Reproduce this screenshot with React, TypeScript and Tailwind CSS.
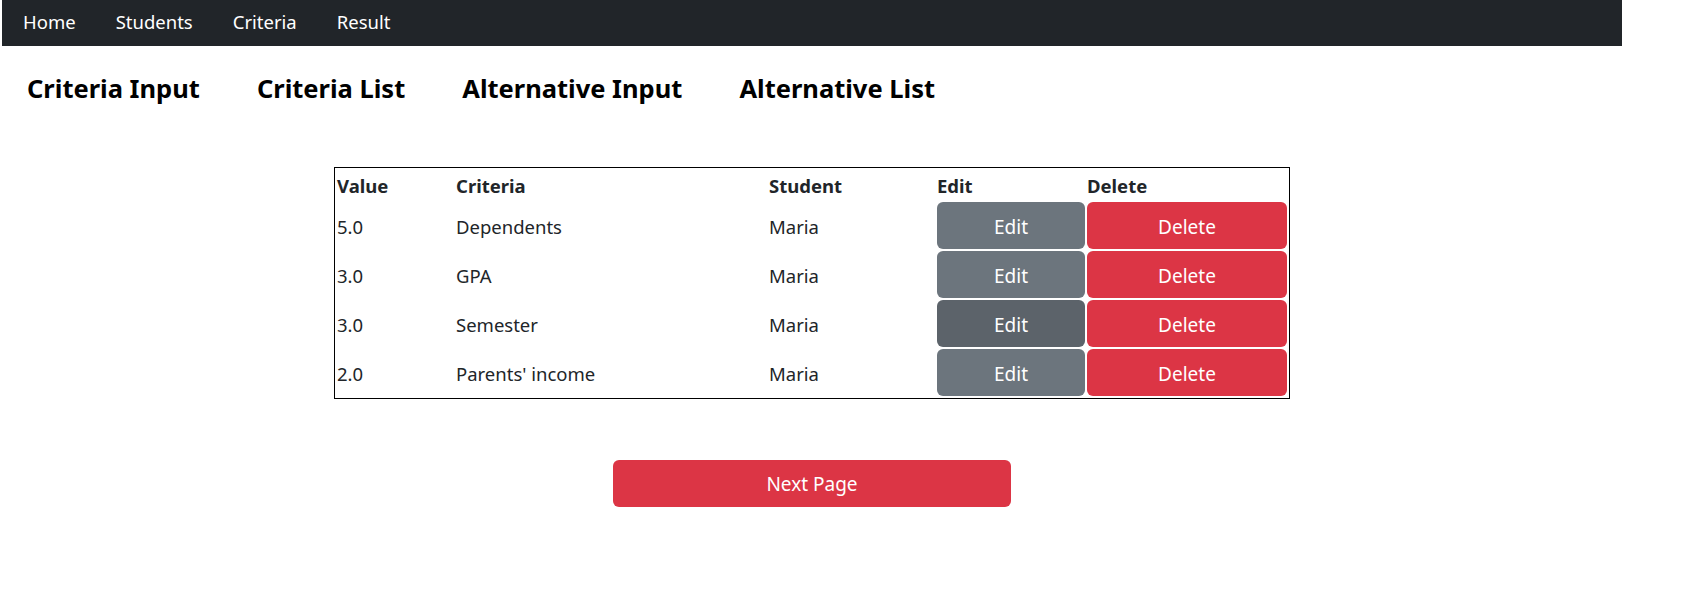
import React from 'react';

const navLinks = ['Home', 'Students', 'Criteria', 'Result'];
const sections = ['Criteria Input', 'Criteria List', 'Alternative Input', 'Alternative List'];

const rows = [
  { value: '5.0', criteria: 'Dependents', student: 'Maria' },
  { value: '3.0', criteria: 'GPA', student: 'Maria' },
  { value: '3.0', criteria: 'Semester', student: 'Maria', hovered: true },
  { value: '2.0', criteria: "Parents' income", student: 'Maria' },
];

const App = () => {
  return (
    <div className="ml-[2px] w-[1620px] bg-white font-['Noto_Sans',sans-serif] text-[#212529]">
      {/* top navbar */}
      <nav className="h-[46px] bg-[#212529] flex items-center gap-10 pl-[21px] pb-[2px] text-[18.5px] text-white">
        {navLinks.map((link) => (
          <a key={link} href="#" className="leading-none">
            {link}
          </a>
        ))}
      </nav>

      {/* section links */}
      <div className="flex gap-[57px] pl-[25px] mt-[27px] text-[25.5px] font-bold text-black leading-[31px]">
        {sections.map((s) => (
          <h4 key={s}>{s}</h4>
        ))}
      </div>

      <div className="flex justify-center mt-[63px]">
        <table className="border border-black border-separate border-spacing-[2px] text-[18.5px]">
          <thead>
            <tr className="h-[30px] text-left">
              <th className="w-[117px] p-0 pt-[2px] font-bold">Value</th>
              <th className="w-[311px] p-0 pt-[2px] font-bold">Criteria</th>
              <th className="w-[166px] p-0 pt-[2px] font-bold">Student</th>
              <th className="w-[148px] p-0 pt-[2px] font-bold">Edit</th>
              <th className="w-[200px] p-0 pt-[2px] font-bold">Delete</th>
            </tr>
          </thead>
          <tbody>
            {rows.map((row, i) => (
              <tr key={i} className="h-[47px]">
                <td className="p-0 pt-[2px]">{row.value}</td>
                <td className="p-0 pt-[2px]">{row.criteria}</td>
                <td className="p-0 pt-[2px]">{row.student}</td>
                <td className="p-0">
                  <button
                    className={`w-full h-[47px] pt-[3px] rounded-[6px] text-white text-[19px] ${
                      row.hovered ? 'bg-[#5c636a]' : 'bg-[#6c757d]'
                    }`}
                  >
                    Edit
                  </button>
                </td>
                <td className="p-0">
                  <button className="w-full h-[47px] pt-[3px] rounded-[6px] bg-[#dc3545] text-white text-[19px]">
                    Delete
                  </button>
                </td>
              </tr>
            ))}
          </tbody>
        </table>
      </div>

      <div className="flex justify-center mt-[61px] pb-[100px]">
        <button className="w-[398px] h-[47px] pt-[2px] rounded-[6px] bg-[#dc3545] text-white text-[19px]">
          Next Page
        </button>
      </div>
    </div>
  );
};

export default App;
